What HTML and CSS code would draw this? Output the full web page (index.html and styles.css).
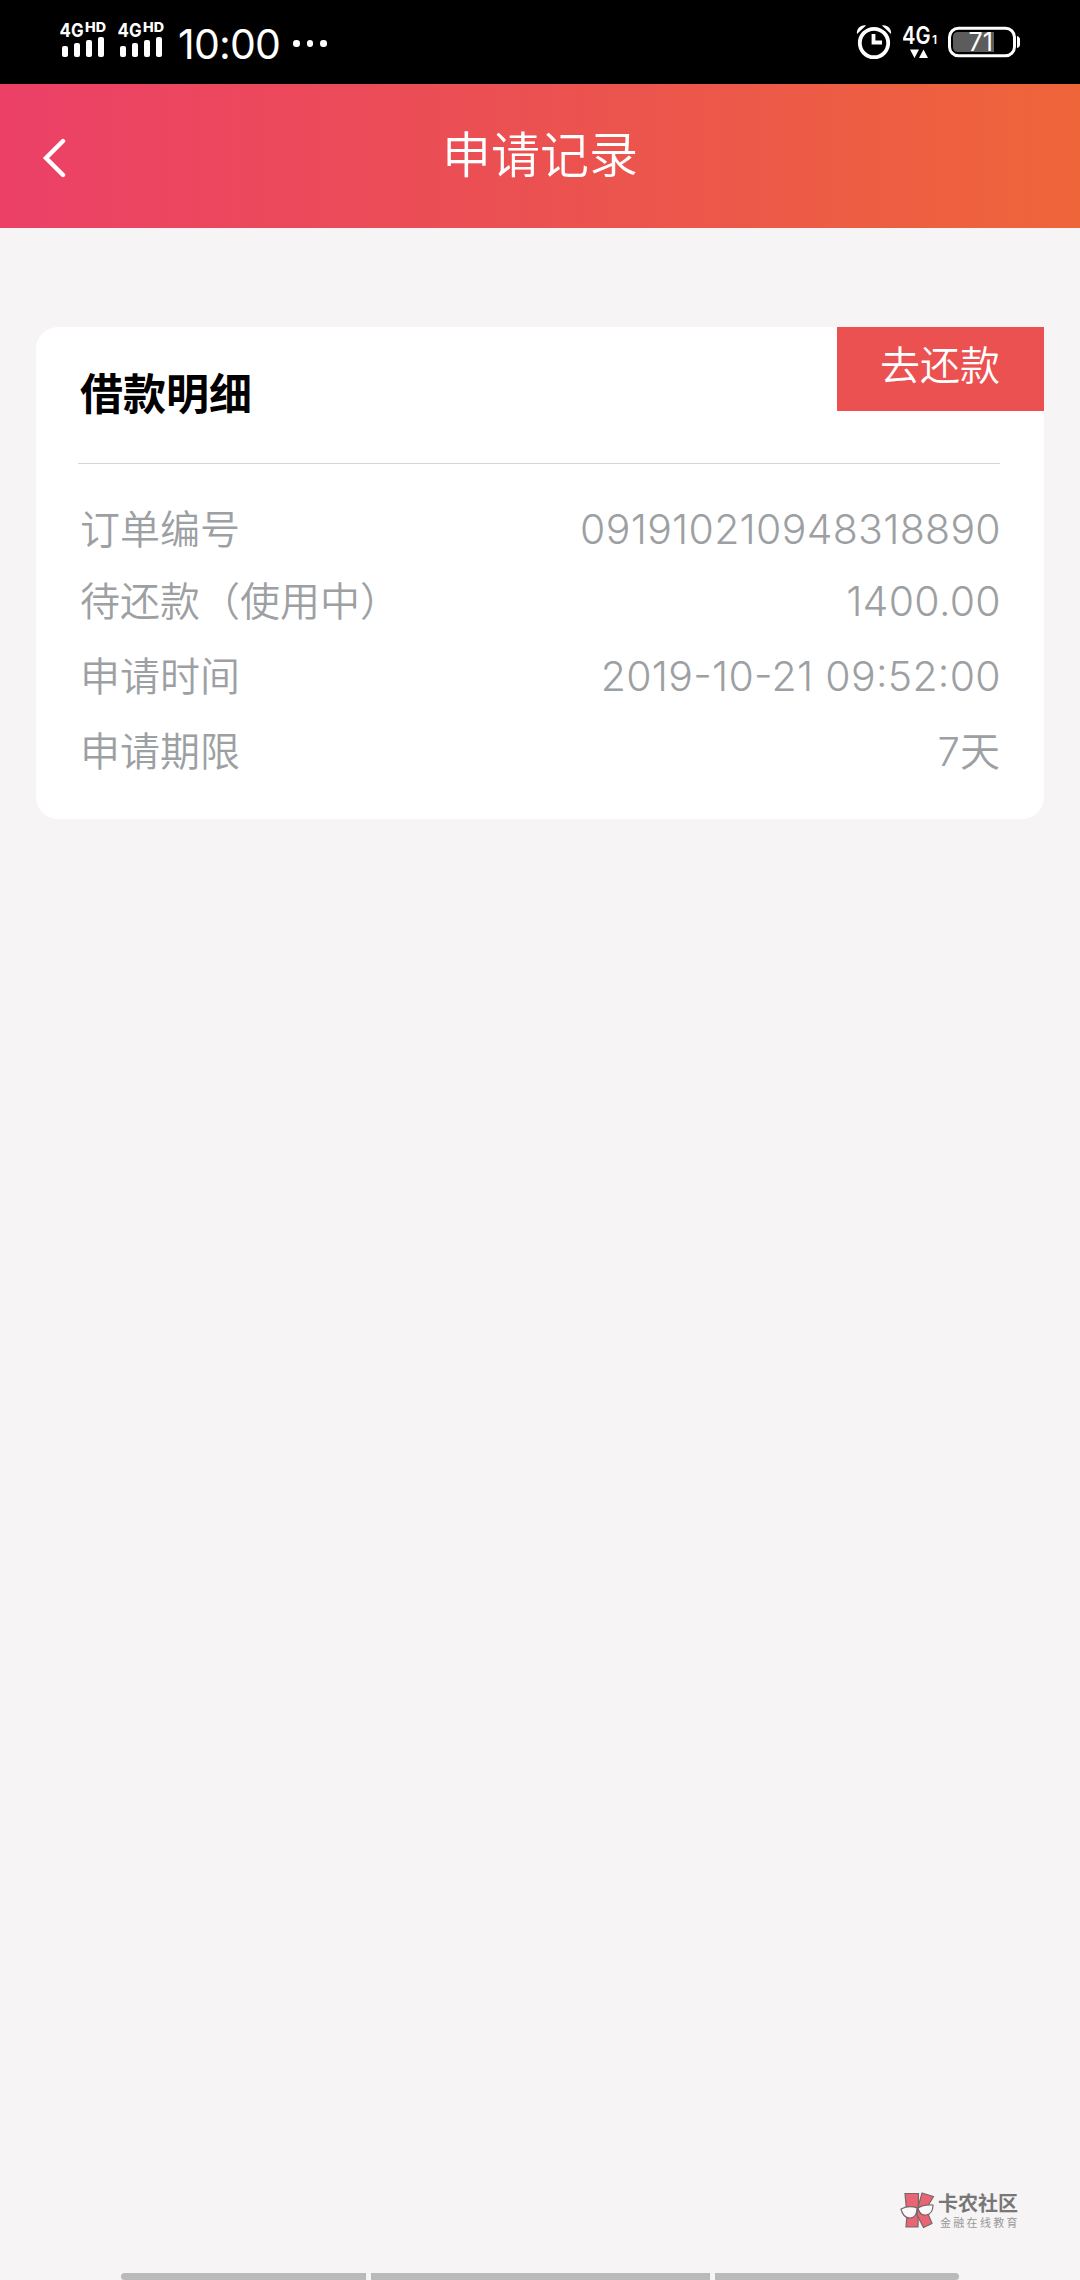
FILE: index.html
```html
<!DOCTYPE html>
<html lang="zh-CN">

<head>
    <meta charset="utf-8">
    <title>申请记录</title>
    <link rel="stylesheet" href="styles.css">
</head>

<body>
    <div class="page">
        <!-- 状态栏 -->
        <div class="status">
            <svg class="signal" width="58" height="84" viewBox="0 0 58 84">
                <text class="net" x="-0.500" y="36.500" textLength="24" lengthAdjust="spacingAndGlyphs">4G</text>
                <text class="hd" x="25" y="32" textLength="21" lengthAdjust="spacingAndGlyphs">HD</text>
                <rect x="2" y="46" width="6" height="11" rx="2"/>
                <rect x="14" y="43" width="6" height="14" rx="2"/>
                <rect x="26" y="40" width="6" height="17" rx="2"/>
                <rect x="38" y="37" width="6" height="20" rx="2"/>
            </svg>
            <svg class="signal" width="58" height="84" viewBox="0 0 58 84">
                <text class="net" x="-0.500" y="36.500" textLength="24" lengthAdjust="spacingAndGlyphs">4G</text>
                <text class="hd" x="25" y="32" textLength="21" lengthAdjust="spacingAndGlyphs">HD</text>
                <rect x="2" y="46" width="6" height="11" rx="2"/>
                <rect x="14" y="43" width="6" height="14" rx="2"/>
                <rect x="26" y="40" width="6" height="17" rx="2"/>
                <rect x="38" y="37" width="6" height="20" rx="2"/>
            </svg>
            <span class="time">10:00</span>
            <div class="dots"><i></i><i></i><i></i></div>
            <div class="status-right">
                <svg width="36" height="84" viewBox="0 0 36 84">
                    <circle cx="18" cy="43" r="14.2" fill="none" stroke="#fff" stroke-width="3.8"/>
                    <path d="M17.500 34v8.500H26" fill="none" stroke="#fff" stroke-width="3.8"/>
                    <path d="M1 34c-1-5 4-9.500 9-8.500zM35 34c1-5-4-9.500-9-8.500z"/>
                </svg>
                <svg class="mobile" width="36" height="84" viewBox="0 0 36 84">
                    <text class="net-big" x="-1" y="43.500" textLength="28.500" lengthAdjust="spacingAndGlyphs">4G</text>
                    <text class="net-sub" x="29" y="43.500">1</text>
                    <path d="M7 49.500h9l-4.500 8.500zM16 58h9l-4.500-8.500z"/>
                </svg>
                <svg class="battery" width="74" height="84" viewBox="0 0 74 84">
                    <path d="M10 32h36v20H10q-5 0-5-5V37q0-5 5-5z" fill="#5c5c5c"/>
                    <rect x="1.500" y="28.200" width="65" height="27.600" rx="9" fill="none" stroke="#fff" stroke-width="3"/>
                    <path d="M69 36q3 1 3 3.500v5q0 2.500-3 3.500z"/>
                    <text class="level" x="20.500" y="51">71</text>
                </svg>
            </div>
        </div>

        <!-- 头部 -->
        <div class="header">
            <svg class="back" width="26" height="42" viewBox="0 0 26 42">
                <path d="M23 4L6 21l17 17" fill="none" stroke="#fff" stroke-width="4.400" stroke-linecap="round"/>
            </svg>
            <h1>申请记录</h1>
        </div>

        <!-- 借款明细 -->
        <div class="card">
            <div class="card-top">
                <h2>借款明细</h2>
                <a class="btn" href="javascript:void(0)">去还款</a>
            </div>
            <ul class="list">
                <li class="first"><span>订单编号</span><span class="num">091910210948318890</span></li>
                <li><span>待还款（使用中）</span><span class="num">1400.00</span></li>
                <li><span>申请时间</span><span class="num">2019-10-21 09:52:00</span></li>
                <li><span>申请期限</span><span class="day">7天</span></li>
            </ul>
        </div>

        <!-- 水印 -->
        <div class="mark">
            <svg width="36" height="38" viewBox="0 0 36 38">
                <g fill="#ea6573" stroke="#77676a" stroke-width="1.200">
                    <path d="M5 1.500h13.500L18 35H6l1-12z"/>
                    <path d="M22 1l11.500 3.500L26 17l6 14.500-8.500 4L17 23l1-8z"/>
                </g>
                <path d="M1 17q8-4 16-1 0 10-7 10-7 0-9-9zM18 16q6-4 15-3 0 9-7 10-6 1-8-7z" fill="#faf8f9" stroke="#77676a" stroke-width="1.200"/>
            </svg>
            <div class="mark-text">
                <b>卡农社区</b>
                <span>金融在线教育</span>
            </div>
        </div>

        <div class="nav-bar"><i></i><i class="mid"></i><i></i></div>
    </div>
</body>

</html>
```
FILE: styles.css
```css
* {
    padding: 0;
    margin: 0;
    box-sizing: border-box;
}

ul {
    list-style: none;
}

a {
    text-decoration: none;
}

body {
    font-family: Inter, "Noto Sans CJK SC", sans-serif;
    background-color: #f6f4f5;
}

svg {
    display: block;
    flex: none;
    fill: #fff;
}

.page {
    display: flex;
    flex-direction: column;
    width: 1080px;
    height: 2280px;
    overflow: hidden;
}

/* 状态栏 */
.status {
    display: flex;
    height: 84px;
    padding: 0 58px 0 60px;
    background-color: #000;
    color: #fff;
}

.net {
    font-size: 19px;
    font-weight: 700;
}

.hd {
    font-size: 13px;
    font-weight: 800;
}

.time {
    width: 103px;
    margin-left: 2px;
    font-size: 41px;
    line-height: 88px;
    letter-spacing: -0.8px;
    white-space: nowrap;
}

.dots {
    display: flex;
    gap: 7px;
    padding: 40px 0 0 12px;
}

.dots i {
    width: 6.500px;
    height: 6.500px;
    border-radius: 50%;
    background-color: #fff;
}

.status-right {
    display: flex;
    margin-left: auto;
}

.mobile {
    margin-left: 11px;
}

.battery {
    margin-left: 9px;
}

.net-big {
    font-size: 24px;
    font-weight: 600;
}

.net-sub {
    font-size: 12px;
    font-weight: 600;
}

.level {
    font-size: 25px;
}

/* 头部 */
.header {
    display: flex;
    align-items: center;
    height: 144px;
    padding: 0 40px;
    background-image: linear-gradient(to right, #ec4067, #eb5151 50%, #ef653a);
    color: #fff;
}

.back {
    margin-top: 4px;
}

.header h1 {
    flex: 1;
    padding-right: 26px;
    font-size: 49px;
    font-weight: 350;
    line-height: 142px;
    text-align: center;
}

/* 卡片 */
.card {
    height: 492px;
    margin: 99px 36px 0;
    border-radius: 22px;
    background-color: #fff;
}

.card-top {
    display: flex;
    justify-content: space-between;
    height: 136px;
    margin-left: 42px;
}

.card-top h2 {
    padding-left: 2px;
    font-size: 43px;
    font-weight: 700;
    line-height: 134px;
}

.btn {
    width: 207px;
    height: 84px;
    padding-left: 43px;
    background-color: #ec5151;
    color: #fff;
    font-size: 40px;
    font-weight: 350;
    line-height: 78px;
}

.list {
    margin: 0 44px 0 42px;
    padding-top: 28px;
    border-top: 1px solid #d5d5d5;
}

.list li {
    display: flex;
    justify-content: space-between;
    height: 75px;
    padding-left: 2px;
    color: #9da0a3;
    font-size: 40px;
    font-weight: 350;
    line-height: 75px;
}

.list .first {
    height: 72px;
}

.list .num {
    margin-right: -1px;
    font-size: 41px;
    font-weight: 300;
    letter-spacing: 0.3px;
    font-feature-settings: "case";
}

/* 水印 */
.mark {
    display: flex;
    gap: 2px;
    margin: auto 0 43px 900px;
}

.mark-text {
    display: flex;
    flex-direction: column;
    padding-top: 1px;
    color: #777;
}

.mark-text b {
    font-size: 20px;
    font-weight: 700;
    line-height: 23px;
}

.mark-text span {
    padding-left: 2px;
    font-size: 11px;
    line-height: 14px;
    letter-spacing: 2.300px;
    color: #999;
}

.nav-bar {
    display: flex;
    gap: 5px;
    height: 7px;
    padding: 0 121px;
}

.nav-bar i {
    flex: 1;
    background-color: #bababa;
}

.nav-bar .mid {
    flex: none;
    width: 339px;
}

.nav-bar i:first-child {
    border-radius: 4px 0 0 4px;
}

.nav-bar i:last-child {
    border-radius: 0 4px 4px 0;
}
```
